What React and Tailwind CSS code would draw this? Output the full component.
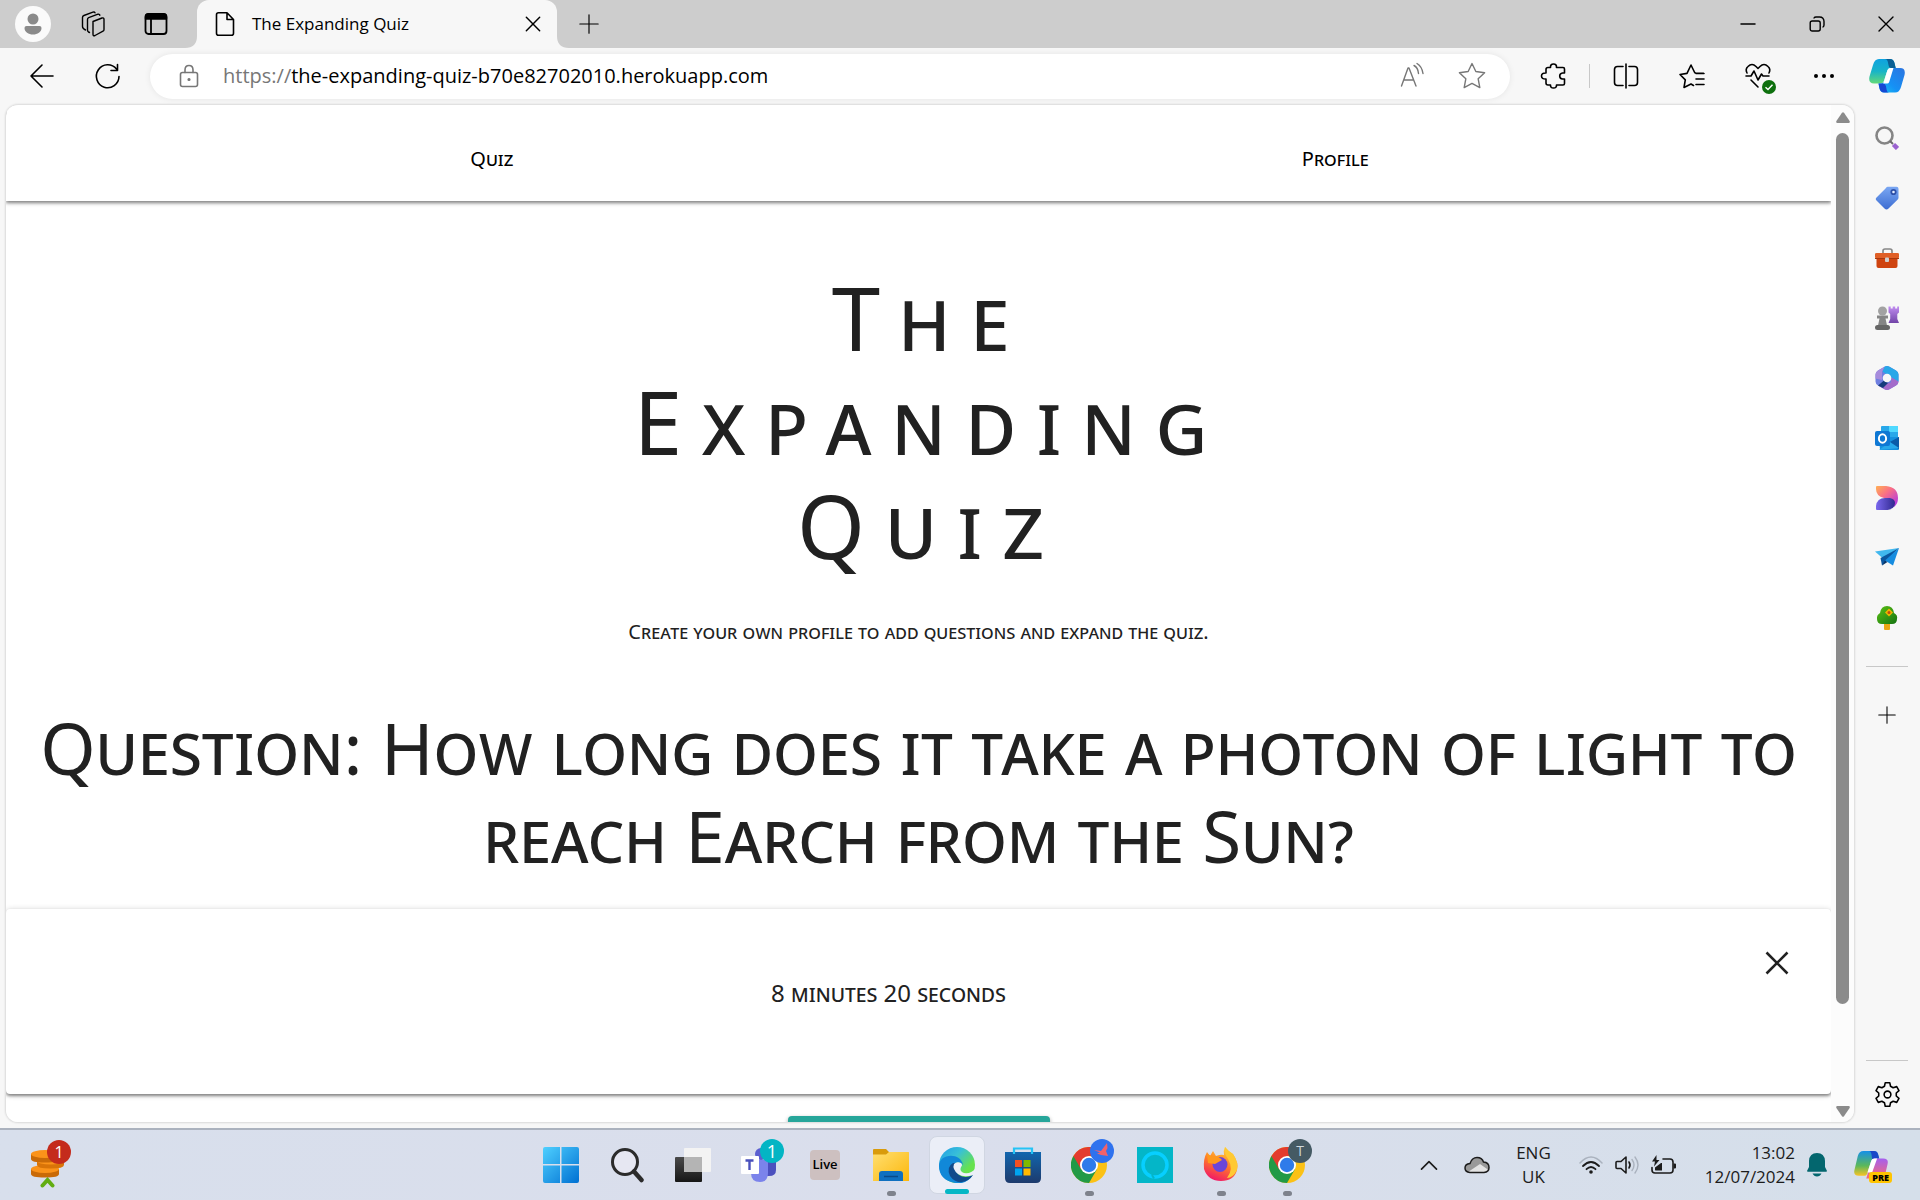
function Svg({ box = "0 0 24 24", className = "size-6", children, label }) {
  return (
    <svg viewBox={box} className={className} fill="none" stroke="currentColor" strokeWidth="1.4" strokeLinecap="round" strokeLinejoin="round" aria-label={label} aria-hidden={label ? undefined : true}>
      {children}
    </svg>
  );
}

function IconButton({ label, className = "", children }) {
  return (
    <button type="button" aria-label={label} className={`flex shrink-0 items-center justify-center ${className}`}>
      {children}
    </button>
  );
}

const plus = <path d="M12 1v22M1 12h22" />;

function TabStrip() {
  return (
    <header className="flex h-12 shrink-0 items-stretch bg-[#cdcdcd] text-black">
      <IconButton label="Profile" className="ml-[15px] w-9">
        <svg viewBox="0 0 36 36" className="size-9" aria-hidden="true">
          <circle cx="18" cy="18" r="18" fill="#fafafa" />
          <circle cx="18" cy="13" r="5.5" fill="#8a8a8a" />
          <path d="M11.500 20h13q2 0 2 2c0 4-4 6.500-8.500 6.500s-8.500-2.500-8.500-6.500q0-2 2-2Z" fill="#8a8a8a" />
        </svg>
      </IconButton>
      <IconButton label="Workspaces" className="ml-7 w-7">
        <Svg className="size-7" box="0 0 28 28">
          <path d="m14 11.500 9-3.500q2-.5 2 1.500v10q0 1.200-1 1.700l-8 4.300q-2 .8-2-1.300V13q0-1 0-1.500Z" />
          <path d="M10.500 22.500 9.500 22q-1-.6-1-2V9.500q0-1.400 1.200-1.900L19 4.200q1.500-.4 1.900 1" />
          <path d="M6.500 20q-3-1.500-3-3.500V7.500q0-1.500 1.400-2l9-3.300q1.600-.5 2.100.6" />
        </Svg>
      </IconButton>
      <IconButton label="Tab actions" className="ml-[35px] w-7">
        <Svg className="size-7" box="0 0 28 28">
          <rect x="3.500" y="4" width="21" height="20" rx="3" strokeWidth="1.800" />
          <path d="M3.500 9V7q0-3 3-3h15q3 0 3 3v2Z" fill="currentColor" />
          <path d="M9 9v15" strokeWidth="1.800" />
        </Svg>
      </IconButton>
      <div className="relative ml-[27px] flex w-[360px] items-center rounded-t-xl bg-[#f7f7f7] pr-3 pl-4">
        <svg viewBox="0 0 12 12" className="absolute bottom-0 -left-3 size-3 fill-[#f7f7f7]" aria-hidden="true">
          <path d="M12 0v12H0Q12 12 12 0Z" />
        </svg>
        <svg viewBox="0 0 12 12" className="absolute -right-3 bottom-0 size-3 fill-[#f7f7f7]" aria-hidden="true">
          <path d="M0 0v12h12Q0 12 0 0Z" />
        </svg>
        <Svg className="size-6">
          <path d="M5.500.8h8.500l6.500 6.700v13.700q0 2-2 2h-13q-2 0-2-2V2.800q0-2 2-2ZM14 .8v6.700h6.500" strokeWidth="1.600" />
        </Svg>
        <span className="ml-[15px] flex-1 text-[17px]">The Expanding Quiz</span>
        <IconButton label="Close tab" className="size-6">
          <Svg className="size-4"><path d="M2 2 22 22M22 2 2 22" strokeWidth="2.200" /></Svg>
        </IconButton>
      </div>
      <IconButton label="New tab" className="ml-5 w-6">
        <Svg className="size-5">{plus}</Svg>
      </IconButton>
      <div className="flex-1" />
      <IconButton label="Minimize" className="w-[69px]">
        <Svg className="size-4" box="0 0 16 16"><path d="M1 8h14" strokeWidth="1.500" /></Svg>
      </IconButton>
      <IconButton label="Restore" className="w-[69px]">
        <Svg className="size-4" box="0 0 16 16">
          <rect x="1.200" y="5" width="10" height="10" rx="2" />
          <path d="M5 2Q5.600 1 7 1h3.500Q15 1 15 5.500V9q0 1.400-1 2" />
        </Svg>
      </IconButton>
      <IconButton label="Close" className="w-[69px]">
        <Svg className="size-4" box="0 0 16 16"><path d="m1 1 14 14M15 1 1 15" /></Svg>
      </IconButton>
    </header>
  );
}

const starPath = "m12 1.300 3.300 6.900 7.500 1-5.500 5.200 1.400 7.500-6.700-3.600-6.700 3.600 1.400-7.500L1.200 9.200l7.500-1Z";

function CopilotLogo({ className }) {
  return (
    <svg viewBox="0 0 36 34" className={className} aria-hidden="true">
      <defs>
        <linearGradient id="cpa" x1="0" y1="0" x2="0" y2="1"><stop offset="0" stopColor="#0fa2e0" /><stop offset=".5" stopColor="#18b4c8" /><stop offset="1" stopColor="#63d978" /></linearGradient>
        <linearGradient id="cpb" x1="1" y1="0" x2="0" y2="1"><stop offset="0" stopColor="#2c74e0" /><stop offset=".6" stopColor="#1591f5" /><stop offset="1" stopColor="#19c5f2" /></linearGradient>
      </defs>
      <path d="M10 0h11q3.500 0 4.500 4l1.200 5h-5q-2.500 0-3.500 3l-3 9.500q-1 3-4 3H5q-6 0-4.500-7L4 6Q5.500 0 10 0Z" fill="url(#cpa)" />
      <path d="M21 0q3.500 0 4.500 4l1.200 5H22q-2 0-2.500-3L18.600 2Q18 0 16 0Z" fill="#0b5f94" />
      <path d="M26 33.500H15q-3.500 0-4.500-4l-1-5h2q3 0 4-3l3.300-9.500q1-3 4.200-3H31q6 0 4.500 7L32 28q-1.500 5.500-6 5.500Z" fill="url(#cpb)" />
      <path d="M15 33.500q-3.500 0-4.500-4l-1-5h5q1.800 0 2.400 2.600l.8 3.900q.5 2.500 2.300 2.500Z" fill="#1648d4" />
      <path d="M21.500 9h3l-4.300 14q-.6 1.500-2 1.500h-4l4-12.500q.8-3 3.300-3Z" fill="#fff" />
    </svg>
  );
}

function Toolbar() {
  return (
    <div className="flex h-14 shrink-0 items-center bg-[#f7f7f7] text-black">
      <IconButton label="Back" className="ml-7 w-7">
        <Svg className="size-7" box="0 0 28 28"><path d="M14 3 3 14l11 11M3 14h22" strokeWidth="1.600" /></Svg>
      </IconButton>
      <IconButton label="Refresh" className="ml-[38px] w-7">
        <Svg className="size-7" box="0 0 28 28"><path d="M25 14.500A11.300 11.500 0 1 1 22.500 7M23.500 2.500v6H17" strokeWidth="1.600" /></Svg>
      </IconButton>
      <div className="ml-7 flex h-[45px] flex-1 items-center rounded-full bg-white pr-6 pl-[27px] text-[#777] shadow-[0_0_6px_rgba(0,0,0,0.08)]">
        <Svg className="size-6" label="Site information">
          <rect x="3.500" y="8.500" width="17" height="14" rx="2" strokeWidth="1.600" />
          <path d="M8 8.500V6q0-4.500 4-4.500T16 6v2.500" strokeWidth="1.600" />
          <circle cx="12" cy="15.500" r=".9" fill="currentColor" />
        </Svg>
        <a href="https://the-expanding-quiz-b70e82702010.herokuapp.com" className="ml-[22px] flex-1 text-xl text-black">
          <span className="text-[#777]">https://</span>the-expanding-quiz-b70e82702010.herokuapp.com
        </a>
        <IconButton label="Read aloud" className="w-7">
          <Svg className="size-7" box="0 0 28 28">
            <path d="M3.500 24 10 6h1l7 18M6 18h9.500M16 3.500q4 2 4.500 8M19 1.500q5 3 6 10" />
          </Svg>
        </IconButton>
        <IconButton label="Add to favorites" className="ml-8 w-7"><Svg className="size-7"><path d={starPath} strokeWidth="1.200" /></Svg></IconButton>
      </div>
      <div className="flex items-center">
        <IconButton label="Extensions" className="ml-[29px] w-7">
          <Svg className="size-7" box="0 0 28 28">
            <path d="M9 5.500h2.500q-.2-3.500 3-3.500t3 3.500H24q1.500 0 1.500 1.500v4h-2q-2.800.3-2.800 3t2.800 3h2v4.500q0 1.500-1.500 1.500h-6.500q.2 3-3 3t-3-3H9q-2 0-2-2V17q-4.500.2-4.500-3T7 11V7.500q0-2 2-2Z" strokeWidth="1.600" />
          </Svg>
        </IconButton>
        <span className="ml-[22px] h-6 w-px bg-[#c8c8c8]" />
        <IconButton label="Split screen" className="ml-[22px] w-7">
          <Svg className="size-7" box="0 0 28 28">
            <path d="M11 4.500H5.500q-3 0-3 3v13q0 3 3 3H11M17 4.500h5.500q3 0 3 3v13q0 3-3 3H17M14 2v24" strokeWidth="1.600" />
          </Svg>
        </IconButton>
        <IconButton label="Favorites" className="ml-[38px] w-7">
          <Svg className="size-7" box="0 0 28 28">
            <path d="M15.500 23.500 13 22l-7 3.500 1.300-7.600L2 12.500l7-1.100 4-8.400 3.400 7q.4 1 1.500 1.100l7.600.1M18 11.500h8M18 17h8M18 22.500h8" strokeWidth="1.600" />
          </Svg>
        </IconButton>
        <IconButton label="Browser essentials" className="relative ml-[38px] w-7">
          <Svg className="size-7" box="0 0 28 28">
            <path d="M3 11Q1 7 4 4.500q4-4 8 0l2 2 2-2q4-4 8 0 3 2.500 1 6.500M2 14h5l3-5 4 9 3.500-6 1.500 2h6M7 18l7 7" strokeWidth="1.600" />
          </Svg>
          <svg viewBox="0 0 14 14" className="absolute -right-1 -bottom-1 size-3.5" aria-hidden="true">
            <circle cx="7" cy="7" r="7" fill="#0e700e" /><path d="m3.500 7.200 2.500 2.300 4.500-4.700" fill="none" stroke="#fff" strokeWidth="1.400" />
          </svg>
        </IconButton>
        <IconButton label="Settings and more" className="ml-10 w-6">
          <Svg className="size-6"><g fill="currentColor" stroke="none"><circle cx="4" cy="12" r="2" /><circle cx="12" cy="12" r="2" /><circle cx="20" cy="12" r="2" /></g></Svg>
        </IconButton>
        <IconButton label="Copilot" className="mr-[15px] ml-[33px] w-9"><CopilotLogo className="h-[34px] w-9" /></IconButton>
      </div>
    </div>
  );
}

const sideIcons = [
  ["Search", <><circle cx="9.500" cy="9.500" r="8" fill="none" stroke="#858585" strokeWidth="2.600" /><path d="m15 15 3 3" stroke="#6b6b6b" strokeWidth="2" /><path d="m18.500 18.500 4 4" stroke="#9a62cf" strokeWidth="4.500" /></>],
  ["Shopping", <><path d="M12.500.8h9q2 0 2 2v9q0 1-1 2l-9 8.800q-2 2-4 0l-8-8q-1.500-1.500 0-3l9-9q1-1.800 2-1.800Z" fill="url(#tag)" /><circle cx="18.500" cy="6" r="2.200" fill="#e5edff" stroke="#2e50a8" strokeWidth="1.800" /></>],
  ["Tools", <><path d="M8 7V5q0-2 2-2h5q2 0 2 2v2" fill="none" stroke="#888" strokeWidth="1.700" /><path d="M1.500 11h21v9q0 2-2 2h-17q-2 0-2-2Z" fill="#cf4410" /><path d="M1.500 7h21q1.500 0 1.500 1v3q0 1.500-2 2H2q-2-.5-2-2V8q0-1 1.500-1Z" fill="#e05f26" /><path d="M0 12.500h24" stroke="#a8370c" /><rect x="10" y="11.500" width="4" height="4.500" rx="1" fill="#d0d0d0" /></>],
  ["Games", <><circle cx="7.500" cy="5" r="4.500" fill="#a2a2a2" /><path d="M2 9.500h11v3h-2.500l1.500 7h-9l1.500-7H2Z" fill="#858585" /><rect y="19" width="15" height="5" rx="2.500" fill="#666" /><path d="M13.500.5h2.200v2h2v-2h2.500v2h2v-2H24v6l-1.700 1.500v5l1.700 4H13.500l1.700-4V8l-1.700-1.500Z" fill="url(#rook)" /></>],
  ["Microsoft 365", <><path d="M9.500.8q2.500-1.500 5 0L21 4.500q2.500 1.500 2.500 4v7q0 2.500-2.500 4l-6.500 3.700q-2.500 1.500-5 0L3 19.500Q.5 18 .5 15.500v-7Q.5 6 3 4.500Z" fill="#6f7fe0" /><path d="M9.500.8q2.500-1.500 5 0L21 4.500q2.500 1.500 2.500 4v7l-8-4.500-8-5.500Z" fill="#28a7e8" /><path d="M23.500 15.500q0 2.500-2.500 4l-6.500 3.700q-2.500 1.500-5 0L4 20l12-3.500.5-5Z" fill="#a36bca" /><path d="M9.500.8 3 4.500Q.5 6 .5 8.500v4L7 14V6Z" fill="#a78cdc" /><path d="m3 19.500 6-5 4 2.500-5 5Z" fill="#163c7c" /><circle cx="12" cy="12" r="4.300" fill="#f7f7f7" /></>],
  ["Outlook", <><rect x="6" y="0" width="17" height="13" rx="1" fill="#28a8ea" /><path d="M14 0h9v6h-9Z" fill="#50d9ff" /><path d="M4 11h20v12q0 1-1 1H5Z" fill="#1490df" /><path d="m24 11-11 6 11 6Z" fill="#0b5ba8" /><path d="m4 24 20-2-9-6Z" fill="#28a8ea" /><rect y="5" width="15" height="15" rx="2" fill="#0f78d4" /><ellipse cx="7.500" cy="12.500" rx="3.600" ry="4.200" fill="none" stroke="#fff" strokeWidth="2" /></>],
  ["Designer", <><path d="M2 0h9q12 1 12 12 0 6-4 9l-2-8-8-1Q1 10 1 3V1q0-1 1-1Z" fill="url(#drop)" /><path d="M2 24q-1 0-1-1v-3q1-8 9-8h5q5 1 5 5 0 7-10 7Z" fill="url(#drop2)" /></>],
  ["Drop", <><path d="M0 5.500 24 2 8 12.500Z" fill="#41b8ef" /><path d="M24 2 5.500 12l1.500 7.500Z" fill="#0b57a0" /><path d="M24 2 10 14.500l8 5Z" fill="#168ce0" /><path d="m10 14.500-3 5 5.500-3.500Z" fill="#0a3668" /></>],
  ["Tree", <><rect x="9" y="17" width="6" height="7" rx="1" fill="#eaa714" /><path d="M12 0q6 0 7 7 4 2 3 6 0 5-5 5H7q-5 0-5-5-.5-4 3-6Q6 0 12 0Z" fill="url(#tree)" /><path d="M14 2.500 18 6.500l-4 4-4-4Z" fill="#f0b400" /><circle cx="14" cy="6.500" r="1.500" fill="#c04a10" /></>],
];

function SideBar() {
  return (
    <aside className="flex w-[66px] shrink-0 flex-col items-center pb-5">
      <svg className="absolute size-0" aria-hidden="true">
        <defs>
          <linearGradient id="tag" x2="0" y2="1"><stop stopColor="#7aa7f3" /><stop offset="1" stopColor="#3d6dd2" /></linearGradient>
          <linearGradient id="rook" x2="0" y2="1"><stop stopColor="#c08cf0" /><stop offset="1" stopColor="#7245a8" /></linearGradient>
          <linearGradient id="drop" x2="1" y2="1"><stop stopColor="#ffb054" /><stop offset=".4" stopColor="#fa7085" /><stop offset="1" stopColor="#a52df2" /></linearGradient>
          <linearGradient id="drop2" x2="1"><stop stopColor="#7a68ee" /><stop offset="1" stopColor="#30298f" /></linearGradient>
          <linearGradient id="tree" x2="1" y2="1"><stop stopColor="#5cc214" /><stop offset="1" stopColor="#147312" /></linearGradient>
        </defs>
      </svg>
      <nav aria-label="Sidebar" className="flex flex-col gap-9 pt-[22px]">
        {sideIcons.map(([name, art]) => (
          <IconButton key={name} label={name} className="size-6">
            <svg viewBox="0 0 24 24" className="size-6" aria-hidden="true">{art}</svg>
          </IconButton>
        ))}
      </nav>
      <span className="mt-9 h-px w-[42px] bg-[#c8c8c8]" />
      <IconButton label="Customize sidebar" className="mt-9 size-6"><Svg className="size-[18px]">{plus}</Svg></IconButton>
      <span className="mt-auto h-px w-[42px] bg-[#c8c8c8]" />
      <IconButton label="Settings" className="mt-5 size-[27px]">
        <Svg className="size-[27px]">
          <path d="M10 1.500h4l.7 3.200 2.300 1.300 3.200-1 2 3.500-2.400 2.200v2.600l2.400 2.200-2 3.500-3.200-1-2.300 1.300-.7 3.200h-4l-.7-3.200L7 18l-3.200 1-2-3.500 2.400-2.200v-2.600L1.800 8.500l2-3.500L7 6l2.300-1.300Z" />
          <circle cx="12" cy="12" r="3" />
        </Svg>
      </IconButton>
    </aside>
  );
}

const smallCaps = "font-['Noto_Sans',sans-serif] [font-variant-caps:small-caps]";

function QuizPage() {
  return (
    <main className={`flex min-w-0 flex-1 flex-col overflow-hidden rounded-l-xl bg-white text-center text-[#212121] ${smallCaps}`}>
      <nav className="relative grid h-24 shrink-0 grid-cols-2 items-center bg-white pt-3 pr-[74px] pl-16 text-xl text-black shadow-[0_2px_3px_rgba(0,0,0,0.4),0_1px_6px_rgba(0,0,0,0.2)]">
        <a href="#quiz">Quiz</a>
        <a href="#profile">Profile</a>
      </nav>
      <h1 className="mx-auto mt-16 max-w-[640px] shrink-0 pl-6 text-[87px] leading-[104px] tracking-[20px]">The Expanding Quiz</h1>
      <p className="mt-[41px] shrink-0 text-xl leading-7">Create your own profile to add questions and expand the quiz.</p>
      <h2 className="mt-[58px] shrink-0 px-2 text-[71px] leading-[88px]">Question: How long does it take a photon of light to reach Earch from the Sun?</h2>
      <section className="mt-[29px] flex h-[185px] shrink-0 rounded-sm bg-white pt-10 pr-10 pl-2 shadow-[0_2px_3px_rgba(0,0,0,0.4),0_1px_6px_rgba(0,0,0,0.2)]">
        <p className="flex-1 pt-[26px] text-2xl leading-9">8 minutes 20 seconds</p>
        <IconButton label="Close answer" className="size-7"><Svg className="size-7"><path d="M3 3 21 21M21 3 3 21" strokeWidth="2.200" strokeLinecap="butt" /></Svg></IconButton>
      </section>
      <button type="button" aria-label="Next question" className="mx-auto mt-[22px] h-11 w-[262px] shrink-0 rounded-sm bg-[#26a69a] shadow-[0_2px_4px_rgba(0,0,0,0.4)]" />
    </main>
  );
}

function ScrollBar() {
  return (
    <div className="flex w-[23px] shrink-0 flex-col items-center rounded-r-xl bg-[#fcfcfc] pt-[7px] pb-[5px]" aria-hidden="true">
      <svg viewBox="0 0 14 11" className="h-[11px] w-3.5 fill-[#8b8b8b]"><path d="M6 .8q1-1.200 2 0l5.600 8.200q.7 2-1 2H1.400q-1.700 0-1-2Z" /></svg>
      <div className="mt-2.5 w-[13px] flex-[871] rounded-full bg-[#8b8b8b]" />
      <div className="flex-[102]" />
      <svg viewBox="0 0 14 11" className="h-[11px] w-3.5 rotate-180 fill-[#8b8b8b]"><path d="M6 .8q1-1.200 2 0l5.600 8.200q.7 2-1 2H1.400q-1.700 0-1-2Z" /></svg>
    </div>
  );
}

function ChromeArt() {
  return (
    <>
      <circle cx="18" cy="18" r="18" fill="#fbc116" />
      <path d="M2.400 9A18 18 0 0 0 18 36l7.800-13.500L18 18Z" fill="#229a46" />
      <path d="M2.400 9A18 18 0 0 1 33.600 9H18v9l-7.800 4.500Z" fill="#e33b2e" />
      <circle cx="18" cy="18" r="9" fill="#fff" />
      <circle cx="18" cy="18" r="7.200" fill="#2f7bea" />
    </>
  );
}

const tasks = [
  { name: "Start", art: <g fill="url(#win)"><path d="M0 2q0-2 2-2h15v17H0ZM18.500 0H34q2 0 2 2v15H18.500ZM0 18.500h17V36H2q-2 0-2-2ZM18.500 18.500H36V34q0 2-2 2H18.500Z" /></g> },
  { name: "Search", art: <g fill="none" stroke="#2b2b2b"><circle cx="16" cy="15" r="12.500" fill="#e6e7f2" strokeWidth="3" /><path d="m25 24.500 7.500 8.500" strokeWidth="4.500" strokeLinecap="round" /></g> },
  { name: "Task view", art: <><rect x="0" y="10" width="27" height="25" rx="1" fill="url(#tv)" /><rect x="9" y="1" width="27" height="24" rx="1" fill="#f3f3f3" /><path d="M9 10h18v15H9Z" fill="#b4b4b4" /></> },
  { name: "Teams", badge: "1", art: <><circle cx="20" cy="7" r="6" fill="#5b5fd0" /><path d="M22 13h13v10q0 6-7 6h-6Z" fill="#4b50be" /><path d="M10 13h17v13q0 9-8 9-9 0-9-9Z" fill="#7b83eb" /><rect y="9" width="18" height="18" rx="1" fill="#fff" /><path d="M4.500 13.500h8M8.500 13.500V23" stroke="#4a51bd" strokeWidth="2.400" /></> },
  { name: "Live", live: true },
  { name: "File Explorer", dot: true, art: <><path d="M0 3q0-1 1-1h12l3 3h18q2 0 2 2v5H0Z" fill="#d99b0b" /><path d="M0 7.500h13L16 5h19q1 0 1 1v28H0Z" fill="url(#fold)" /><path d="M6 34V27q0-3 3-3h18q3 0 3 3v7Z" fill="#0f70c0" /><path d="M11 29.500h14" stroke="#0a4a88" strokeWidth="1.500" /></> },
  { name: "Microsoft Edge", active: true, art: <><circle cx="18" cy="18" r="18" fill="url(#edg)" /><path d="M0 19C0 6 22 5 24 18q-3-4-8-2-6 8 1 14 8 4 17-2-7 10-18 8Q0 33 0 19Z" fill="#1188d8" /><path d="M14 16q-7 4-3 13 5 7 12 6 7-1 11-7-8 4-14 0-6-5-4-12Z" fill="#114a8b" /><path d="M15 17q3-3 7-1 2 2 0 4-2 4 3 6 7 1 11-4v5l-2 1q-9 3-15-1-6-5-4-10Z" fill="#eceff8" /></> },
  { name: "Microsoft Store", art: <><path d="M0 5h36v26q0 5-5 5H5q-5 0-5-5Z" fill="url(#store)" /><path d="M9 7V1.500h18V7" fill="none" stroke="#25c3f5" strokeWidth="2.200" /><path d="M10 13h7v7h-7Z" fill="#f25022" /><path d="M18.500 13h7v7h-7Z" fill="#7fba00" /><path d="M10 21.500h7v7h-7Z" fill="#00a4ef" /><path d="M18.500 21.500h7v7h-7Z" fill="#ffb900" /></> },
  { name: "Chrome", dot: true, bird: true, art: <ChromeArt /> },
  { name: "Alexa", art: <><path d="M0 0h36v36H0Z" fill="#04b6c8" /><circle cx="18" cy="18" r="12" fill="none" stroke="#07cfff" strokeWidth="3.500" /><path d="m15 28 2 3.500" stroke="#04b6c8" strokeWidth="2" /></> },
  { name: "Firefox", dot: true, art: <><path d="M4 5l3 4 3-5 3 5q5-2 8-1-1-4 1-8 3 4 8 7 6 9 4 16-3 11-16 11T1 22Q0 12 4 5Z" fill="url(#fox)" /><path d="M22 0q3 4 8 7 6 9 4 16-4 8-10 8 7-9 1-19-4-5-3-12Z" fill="#ffc933" /><circle cx="17" cy="17.500" r="7.500" fill="#6b45d8" /><path d="M4 7q4 2 7 2 5 0 8 4l-7 4-7-1Z" fill="#ff981d" /></> },
  { name: "Chrome (T)", dot: true, tee: true, art: <ChromeArt /> },
];

function TaskIcon({ t }) {
  return (
    <button type="button" aria-label={t.name} className={`relative flex h-[58px] w-14 items-center justify-center rounded-lg ${t.active ? "border border-[#d0d6e2] bg-[#ebeef7]" : ""}`}>
      {t.live ? (
        <span className="flex size-[30px] items-center justify-center rounded-sm bg-[#cdc0c0] text-[13px] font-semibold text-black">Live</span>
      ) : (
        <svg viewBox="0 0 36 36" className="size-9" aria-hidden="true">{t.art}</svg>
      )}
      {t.badge && <span className="absolute top-[3px] right-[3px] flex size-6 items-center justify-center rounded-full bg-[#03b5c4] text-lg text-white">{t.badge}</span>}
      {t.tee && <span className="absolute top-[3px] right-[3px] flex size-6 items-center justify-center rounded-full bg-[#455a64] text-sm text-[#cfd8dc]">T</span>}
      {t.bird && (
        <svg viewBox="0 0 24 24" className="absolute top-[3px] right-[3px] size-6" aria-hidden="true"><circle cx="12" cy="12" r="12" fill="#2f72ee" /><path d="m4 11 7 1 6-8 .5 5-1.500 3 2 5-7-1-4-1.500 3-1Z" fill="#f2626a" /></svg>
      )}
      {t.dot && <span className="absolute -bottom-0.5 h-[5px] w-[9px] rounded-full bg-[#7e828c]" />}
      {t.active && <span className="absolute -bottom-px h-[5px] w-6 rounded-full bg-[#05b7c5]" />}
    </button>
  );
}

function TaskBar() {
  return (
    <footer className="flex h-[72px] shrink-0 items-center border-t-2 border-[#abb2be] bg-linear-to-r from-[#d8dfec] via-[#dadeec] to-[#d5dfea] text-[#1c1c1c]">
      <svg className="absolute size-0" aria-hidden="true">
        <defs>
          <linearGradient id="win" x2="1" y2="1"><stop stopColor="#4fd0ff" /><stop offset="1" stopColor="#0070d2" /></linearGradient>
          <linearGradient id="tv" x2="0" y2="1"><stop stopColor="#4a4a4a" /><stop offset="1" stopColor="#161616" /></linearGradient>
          <linearGradient id="fold" x2="1" y2="1"><stop stopColor="#ffdf70" /><stop offset="1" stopColor="#fcb70c" /></linearGradient>
          <linearGradient id="edg" x2="1" y2="1"><stop stopColor="#1f9be8" /><stop offset=".35" stopColor="#38c0d8" /><stop offset=".7" stopColor="#66e24e" /></linearGradient>
          <linearGradient id="store" x2="0" y2="1"><stop stopColor="#1266ae" /><stop offset="1" stopColor="#1d3a6c" /></linearGradient>
          <linearGradient id="fox" x1=".7" y1="0" x2=".3" y2="1"><stop stopColor="#ffdc3c" /><stop offset=".5" stopColor="#ff7a28" /><stop offset="1" stopColor="#f0146a" /></linearGradient>
          <linearGradient id="pre" x2="0" y2="1"><stop stopColor="#1590e8" /><stop offset=".6" stopColor="#5cb85a" /><stop offset="1" stopColor="#f8c325" /></linearGradient>
          <linearGradient id="pre2" x2="0" y2="1"><stop stopColor="#a45ff0" /><stop offset="1" stopColor="#fa6a70" /></linearGradient>
        </defs>
      </svg>
      <div className="flex flex-[7] items-center pl-[31px]">
        <button type="button" aria-label="Widgets, 1 notification" className="relative h-[46px] w-9">
          <svg viewBox="0 0 36 46" className="h-[46px] w-9" aria-hidden="true">
            <path d="M0 27v5q0 3.500 14 3.500T28 32v-5Z" fill="#c96a08" />
            <ellipse cx="14" cy="27" rx="14" ry="4" fill="#fb931a" />
            <path d="M6 19v4q0 3.500 13.500 3.500T33 23v-4Z" fill="#d97408" />
            <ellipse cx="19.500" cy="19" rx="13.500" ry="3.500" fill="#fb931a" />
            <path d="M0 12v5q0 3.500 14 3.500T28 17v-5Z" fill="#c96a08" />
            <ellipse cx="14" cy="12" rx="14" ry="4" fill="#fb931a" />
            <path d="m11.500 43.500 5-5.500 5 5.500" fill="none" stroke="#62ad12" strokeWidth="4" strokeLinecap="round" />
          </svg>
          <span className="absolute -top-0.5 -right-1 flex size-6 items-center justify-center rounded-full bg-[#c42b1c] text-base text-white">1</span>
        </button>
      </div>
      <nav aria-label="Taskbar" className="flex shrink-0 gap-2.5 pr-[9px] pl-[5px]">
        {tasks.map((t) => <TaskIcon key={t.name} t={t} />)}
      </nav>
      <div className="flex flex-[8] items-center justify-end pr-7">
        <IconButton label="Show hidden icons" className="w-5"><Svg className="size-5"><path d="m3 17 9-9 9 9" strokeWidth="2" /></Svg></IconButton>
        <svg viewBox="0 0 26 18" className="ml-[25px] h-[18px] w-[26px]" aria-label="OneDrive">
          <path d="M6 16.500Q1 16 1 12t5-4.500Q8 1.500 13 1.500t6.500 4.500q5.500.5 5.500 5.500 0 4.500-5 5Z" fill="#999" />
          <path d="m4 16 12-8 8.500 6q-1.500 2.500-4.500 2.500H6Z" fill="#e3e3e3" />
          <path d="M6 16.500Q1 16 1 12t5-4.500Q8 1.500 13 1.500t6.500 4.500q5.500.5 5.500 5.500 0 4.500-5 5Z" fill="none" stroke="#1c1c1c" strokeWidth="1.500" />
        </svg>
        <p className="ml-[26px] text-center text-[17px] leading-6">ENG<br />UK</p>
        <Svg className="ml-7 h-5 w-6" box="0 0 24 20" label="Wi-Fi">
          <path d="M1 8Q12-4 23 8" stroke="#aab2be" strokeWidth="1.500" />
          <path d="M4 11q8-8 16 0M7.500 14.200q4.500-4.400 9 0" strokeWidth="1.800" />
          <circle cx="12" cy="17" r="1.800" fill="currentColor" stroke="none" />
        </Svg>
        <Svg className="ml-3 h-5 w-6" box="0 0 24 20" label="Volume">
          <path d="M1 7.500q0-1 1-1h4L11 2v16l-5-4.500H2q-1 0-1-1ZM14 7q2 3 0 6" strokeWidth="1.600" />
          <path d="M17 4.500q4 5.500 0 11M20 2q6 8 0 16" stroke="#aab2be" />
        </Svg>
        <Svg className="ml-3 h-5 w-[26px]" box="0 0 26 20" label="Battery">
          <path d="M12 4h7q3 0 3 3v8q0 3-3 3H4q-3 0-3-3v-2.500" strokeWidth="1.600" />
          <path d="M22.500 8.500H24q1 0 1 1v3q0 1-1 1h-1.500ZM4 15V12.500L10 8h1v7.500H4.500ZM5.500 0 1 6.500h3L3 11.500 8.500 5H5.500Z" fill="currentColor" stroke="none" />
        </Svg>
        <p className="ml-7 text-right text-[17px] leading-6"><time dateTime="2024-07-12T13:02">13:02<br />12/07/2024</time></p>
        <svg viewBox="0 0 20 24" className="ml-3 h-6 w-5 fill-[#03666e]" aria-label="Notifications"><path d="M10 0q7.500 0 8 8v6l2 4q0 .8-1 .8H1q-1 0-1-.8l2-4V8q.5-8 8-8ZM5.500 20.500h9Q13 23.500 10 23.500t-4.500-3Z" /></svg>
        <button type="button" aria-label="Copilot preview" className="relative ml-[27px] h-9 w-[38px]">
          <svg viewBox="0 0 36 34" className="h-7 w-[34px]" preserveAspectRatio="none" aria-hidden="true">
            <path d="M10 0h11q3.500 0 4.500 4l1.200 5h-5q-2.500 0-3.500 3l-3 11q-1 7-4 7H5q-6 0-4.500-7L4 6Q5.500 0 10 0Z" fill="url(#pre)" />
            <path d="M21 0q3.500 0 4.500 4l1.200 5H22q-2 0-2.500 3L18.600 5Q18 0 16 0Z" fill="#1a48c8" />
            <path d="M22.700 9H31q6 0 4.500 7L32 33.500H13l5.500-21.500q1-3 4.200-3Z" fill="url(#pre2)" />
            <path d="M21.500 9h3l-5.300 17h-5l4-14q.8-3 3.300-3Z" fill="#fff" />
          </svg>
          <span className="absolute right-0 bottom-0 rounded-[3px] bg-[#ffc400] px-[3px] text-[9px] leading-[11px] font-extrabold text-black">PRE</span>
        </button>
      </div>
    </footer>
  );
}

export default function App() {
  return (
    <div className="flex h-screen flex-col overflow-hidden bg-[#f7f7f7] font-['Open_Sans',sans-serif]">
      <TabStrip />
      <Toolbar />
      <div className="flex min-h-0 flex-1">
        <div className="mt-px mb-1.5 ml-1.5 flex min-w-0 flex-1 rounded-xl shadow-[0_0_2px_1px_rgba(0,0,0,0.12)]">
          <QuizPage />
          <ScrollBar />
        </div>
        <SideBar />
      </div>
      <TaskBar />
    </div>
  );
}
